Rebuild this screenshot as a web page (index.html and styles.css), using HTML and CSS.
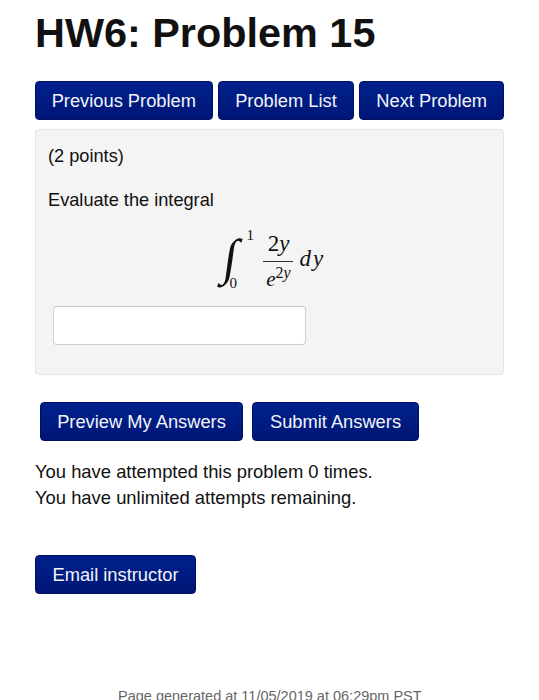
FILE: index.html
```html
<!DOCTYPE html>
<html lang="en">
<head>
<meta charset="utf-8">
<title>HW6: Problem 15</title>
<link rel="stylesheet" href="styles.css">
</head>
<body>
<main class="page">
  <h1 class="title">HW6: Problem 15</h1>
  <nav class="nav">
    <a class="btn btn-prev">Previous Problem</a>
    <a class="btn btn-list">Problem List</a>
    <a class="btn btn-next">Next Problem</a>
  </nav>
  <section class="well">
    <p class="points">(2 points)</p>
    <p class="prompt">Evaluate the integral</p>
    <div class="math">
      <span class="int">∫</span>
      <span class="limits"><span class="up">1</span><span class="lo">0</span></span>
      <span class="frac"><span class="num">2<i>y</i></span><span class="den"><i>e</i><sup>2<i>y</i></sup></span></span>
      <span class="dy"><i>dy</i></span>
    </div>
    <input class="answer" type="text" aria-label="Answer">
  </section>
  <div class="actions">
    <a class="btn btn-preview">Preview My Answers</a>
    <a class="btn btn-submit">Submit Answers</a>
  </div>
  <p class="attempts">You have attempted this problem 0 times.<br>You have unlimited attempts remaining.</p>
  <a class="btn btn-email">Email instructor</a>
  <footer class="footer">Page generated at 11/05/2019 at 06:29pm PST</footer>
</main>
</body>
</html>
```
FILE: styles.css
```css
html, body {
  margin: 0;
  padding: 0;
  height: 700px;
  overflow: hidden;
  background: #fff;
}
body {
  font-family: "Liberation Sans", Arial, sans-serif;
  color: #111;
}
.page {
  padding: 0 35px;
  height: 700px;
  overflow: hidden;
}
.title {
  margin: 0;
  padding-top: 10px;
  height: 81px;
  box-sizing: border-box;
  font-size: 41.4px;
  line-height: 46px;
  font-weight: bold;
  color: #111;
}
.btn {
  display: inline-flex;
  align-items: center;
  justify-content: center;
  box-sizing: border-box;
  height: 39px;
  border-radius: 4px;
  border: 1px solid #00105f;
  background: linear-gradient(#00208c, #001c82 50%, #001576);
  color: #f2f4fa;
  font-size: 18.3px;
  white-space: nowrap;
}
.nav {
  display: flex;
  gap: 5px;
}
.btn-prev { width: 178px; }
.btn-list { width: 137px; }
.btn-next { width: 145px; }
.well {
  margin-top: 9px;
  width: 469px;
  height: 246px;
  box-sizing: border-box;
  padding: 15px 12px 0;
  background: #f4f4f4;
  border: 1px solid #e4e4e4;
  border-radius: 4px;
  font-size: 18.2px;
}
.points {
  margin: 0;
  line-height: 22px;
}
.prompt {
  margin: 22px 0 0;
  line-height: 22px;
}
.math {
  display: flex;
  align-items: center;
  justify-content: center;
  height: 76px;
  margin-top: 10px;
  padding-left: 10px;
  font-family: "Liberation Serif", "Times New Roman", serif;
  color: #111;
  font-size: 23px;
}
.int {
  font-size: 50px;
  line-height: 60px;
  margin-bottom: 4px;
  font-family: "Liberation Serif", serif;
  transform: skewX(-8deg);
}
.limits {
  display: flex;
  flex-direction: column;
  justify-content: space-between;
  height: 64px;
  width: 19px;
  font-size: 15px;
  line-height: 16px;
}
.up { margin-left: 9px; }
.lo { margin-left: -8px; }
.frac {
  display: flex;
  flex-direction: column;
  align-items: center;
  width: 30px;
  margin-top: 10px;
  margin-left: 7px;
  line-height: 24px;
}
.num {
  border-bottom: 1px solid #333;
  width: 100%;
  text-align: center;
  padding-bottom: 5px;
}
.den {
  line-height: 34px;
  font-size: 21px;
}
.den sup {
  font-size: 16px;
  line-height: 0;
}
.dy {
  margin-left: 6px;
  letter-spacing: 2px;
}
.answer {
  display: block;
  box-sizing: border-box;
  margin: 9px 0 0 5px;
  width: 253px;
  height: 39px;
  padding: 0 8px;
  background: #fff;
  border: 1px solid #cfcfcf;
  border-top-color: #c6c6c6;
  border-radius: 4px;
  outline: none;
}
.actions {
  display: flex;
  gap: 9px;
  margin: 27px 0 0 5px;
}
.btn-preview { width: 203px; }
.btn-submit { width: 167px; }
.attempts {
  margin: 18px 0 0;
  font-size: 18.4px;
  line-height: 26px;
}
.btn-email {
  width: 161px;
  margin-top: 44px;
}
.footer {
  margin-top: 94px;
  margin-left: 83px;
  font-size: 14.5px;
  line-height: 16px;
  color: #666;
  white-space: nowrap;
}
```
